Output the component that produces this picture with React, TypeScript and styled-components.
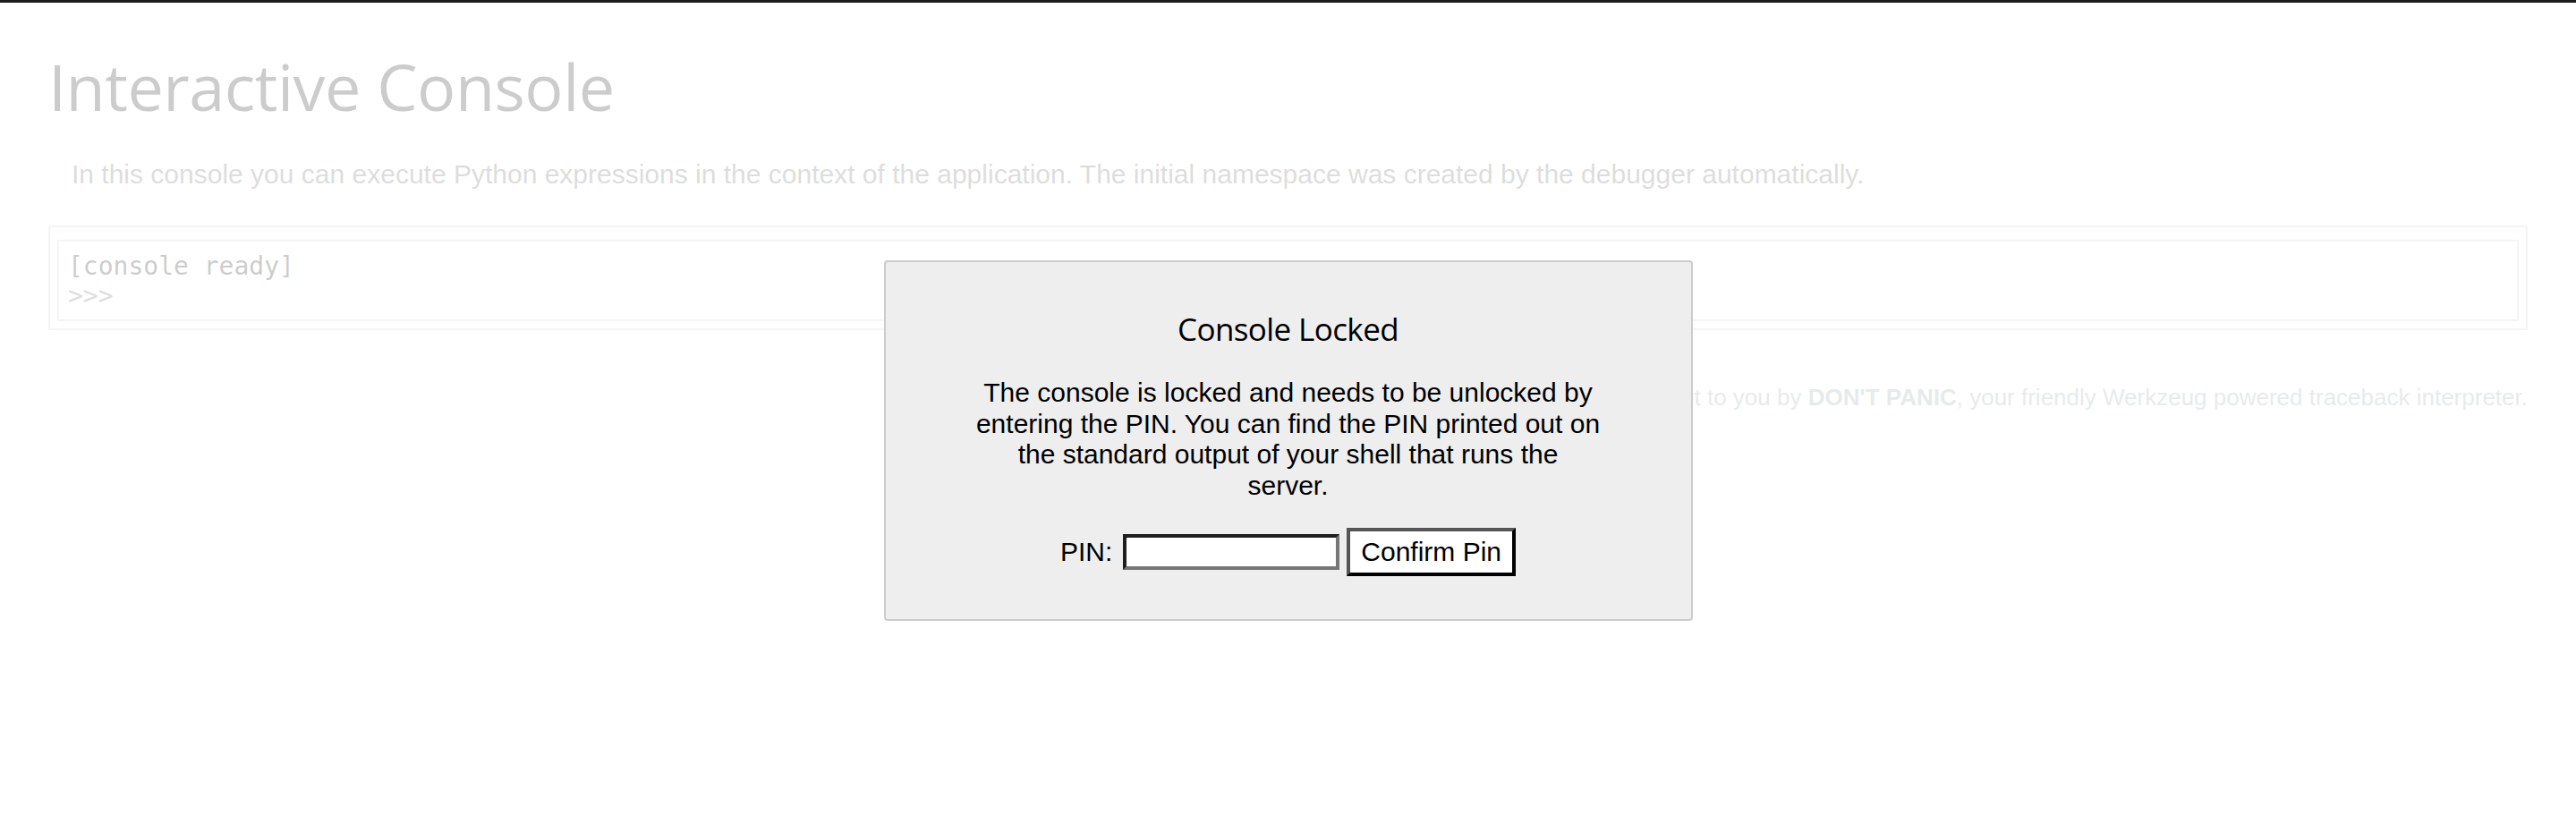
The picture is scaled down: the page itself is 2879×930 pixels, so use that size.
import { FC } from 'react'
import { createGlobalStyle, styled } from 'styled-components'

// The page is the Werkzeug console rendered at 2x, so every size is doubled.

const GlobalStyle = createGlobalStyle`
  html, body {
    margin: 0;
    padding: 0;
    background: #fff;
  }
  body {
    font-family: 'Liberation Sans', Arial, sans-serif;
    font-size: 30px;
    color: #000;
  }
`

const Page = styled.div`
  position: relative;
  min-height: 930px;
  box-sizing: border-box;
  border-top: 3px solid #1c1c1c;
`

const Debugger = styled.div`
  margin: 27px 30px 30px;
  padding: 24px;
  text-align: left;
`

const Title = styled.h1`
  font-family: 'Open Sans', 'Noto Sans', sans-serif;
  font-weight: normal;
  font-size: 72px;
  line-height: 84px;
  letter-spacing: -0.5px;
  margin: 0 0 22px 0;
  color: #000;
`

const Explanation = styled.div`
  margin: 40px 26px;
  font-size: 30px;
  color: #555;
`

const ConsoleBox = styled.div`
  border: 2px solid #ccc;
  padding: 8px;
  background-color: #fafafa;
`

const ConsolePre = styled.pre`
  margin: 6px 0 0 0;
  padding: 11px 10px 10px;
  border: 2px solid #ccc;
  background: #fff;
  font-family: 'DejaVu Sans Mono', monospace;
  font-size: 28px;
  line-height: 33px;
  color: #000;
`

const Prompt = styled.div`
  color: #555;
`

const Footer = styled.div`
  font-size: 26px;
  text-align: right;
  margin: 60px 0;
  color: #86989b;
`

const Overlay = styled.div`
  position: absolute;
  inset: 0;
  background: rgba(255, 255, 255, 0.8);
  text-align: center;
`

const Dialog = styled.div`
  background: #eee;
  padding: 20px 100px 18px;
  width: 700px;
  margin: 288px auto 0 auto;
  border: 2px solid #ccc;
  border-radius: 4px;
`

const DialogTitle = styled.h3`
  font-family: 'Open Sans', 'Noto Sans', sans-serif;
  font-weight: normal;
  font-size: 35px;
  line-height: 40px;
  letter-spacing: -0.6px;
  margin: 35px 0 34px;
`

const Message = styled.p`
  margin: 30px 0;
  line-height: 34.5px;
`

const PinRow = styled.form`
  margin: 30px 0;
  display: flex;
  align-items: center;
  justify-content: center;
  gap: 8px;
`

const PinInput = styled.input`
  box-sizing: border-box;
  width: 242px;
  height: 40px;
  margin: 0 0 0 4px;
  padding: 2px 4px;
  font: inherit;
  background: #fff;
  border-style: solid;
  border-width: 4px;
  border-color: #1e1e1e #767676 #767676 #1e1e1e;
  outline: none;
`

const ConfirmButton = styled.button`
  box-sizing: border-box;
  height: 54px;
  padding: 6px 12px;
  margin: 0;
  font: inherit;
  line-height: 34px;
  background: #fff;
  color: #000;
  border-style: solid;
  border-width: 4px;
  border-color: #555 #000 #000 #555;
`

const App: FC = () => {
  return (
    <>
      <GlobalStyle />
      <Page>
        <Debugger>
          <Title>Interactive Console</Title>
          <Explanation>
            In this console you can execute Python expressions in the context of
            the application. The initial namespace was created by the debugger
            automatically.
          </Explanation>
          <ConsoleBox>
            <ConsolePre>
              <div>[console ready]</div>
              <Prompt>&gt;&gt;&gt; </Prompt>
            </ConsolePre>
          </ConsoleBox>
          <Footer>
            Brought to you by <strong>DON'T PANIC</strong>, your friendly
            Werkzeug powered traceback interpreter.
          </Footer>
        </Debugger>
        <Overlay>
          <Dialog>
            <DialogTitle>Console Locked</DialogTitle>
            <Message>
              The console is locked and needs to be unlocked by entering the PIN.
              You can find the PIN printed out on the standard output of your
              shell that runs the server.
            </Message>
            <PinRow onSubmit={(e) => e.preventDefault()}>
              <span>PIN:</span>
              <PinInput type="text" name="pin" />
              <ConfirmButton type="submit">Confirm Pin</ConfirmButton>
            </PinRow>
          </Dialog>
        </Overlay>
      </Page>
    </>
  )
}

export default App
